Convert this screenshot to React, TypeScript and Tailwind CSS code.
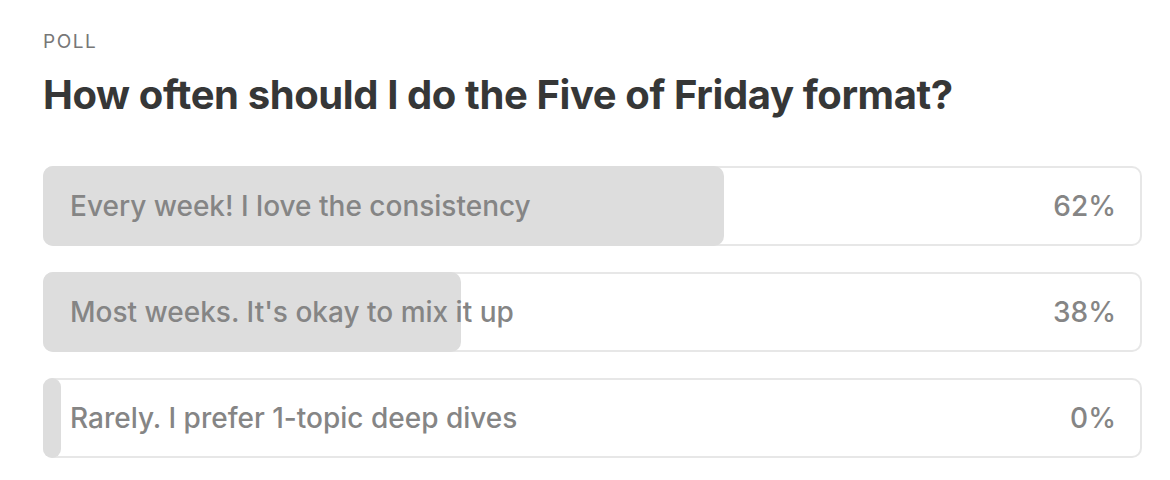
const options = [
  { label: 'Every week! I love the consistency', pct: 62 },
  { label: "Most weeks. It's okay to mix it up", pct: 38 },
  { label: 'Rarely. I prefer 1-topic deep dives', pct: 0 },
]

export default function App() {
  return (
    <div className="w-[1170px] h-[480px] bg-white px-[43px] pt-[30px] font-['Inter','Liberation_Sans',sans-serif]">
      <div className="text-[19px] leading-[24px] tracking-[0.08em] text-[#777777]">POLL</div>
      <h1 className="mt-[17px] text-[40px] leading-[48px] font-bold tracking-[-0.01em] text-[#363737]">
        How often should I do the Five of Friday format?
      </h1>

      <div className="mt-[47px] flex w-[1099px] flex-col gap-[26px]">
        {options.map((o) => (
          <div
            key={o.label}
            className="relative flex h-[80px] items-center justify-between rounded-[10px] pl-[27px] pr-[26px] ring-2 ring-inset ring-[#e7e7e7]"
          >
            <div
              className="absolute inset-y-0 left-0 rounded-[10px] bg-[#dddddd]"
              style={{ width: o.pct === 0 ? '18px' : `${o.pct}%` }}
            />
            <span className="relative text-[28px] font-medium text-[#858585]">{o.label}</span>
            <span className="relative text-[28px] font-medium text-[#858585]">{o.pct}%</span>
          </div>
        ))}
      </div>
    </div>
  )
}
